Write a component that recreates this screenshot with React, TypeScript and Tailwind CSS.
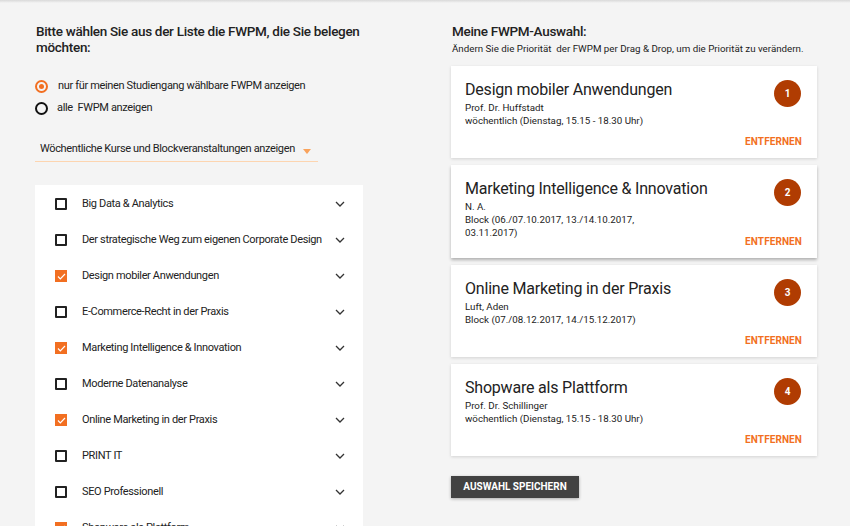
import React from "react";

const courses: { name: string; checked: boolean }[] = [
  { name: "Big Data & Analytics", checked: false },
  { name: "Der strategische Weg zum eigenen Corporate Design", checked: false },
  { name: "Design mobiler Anwendungen", checked: true },
  { name: "E-Commerce-Recht in der Praxis", checked: false },
  { name: "Marketing Intelligence & Innovation", checked: true },
  { name: "Moderne Datenanalyse", checked: false },
  { name: "Online Marketing in der Praxis", checked: true },
  { name: "PRINT IT", checked: false },
  { name: "SEO Professionell", checked: false },
  { name: "Shopware als Plattform", checked: true },
];

const selected = [
  {
    title: "Design mobiler Anwendungen",
    lines: ["Prof. Dr. Huffstadt", "wöchentlich (Dienstag, 15.15 - 18.30 Uhr)"],
  },
  {
    title: "Marketing Intelligence & Innovation",
    lines: ["N. A.", "Block (06./07.10.2017, 13./14.10.2017,", "03.11.2017)"],
  },
  {
    title: "Online Marketing in der Praxis",
    lines: ["Luft, Aden", "Block (07./08.12.2017, 14./15.12.2017)"],
  },
  {
    title: "Shopware als Plattform",
    lines: ["Prof. Dr. Schillinger", "wöchentlich (Dienstag, 15.15 - 18.30 Uhr)"],
  },
];

function Chevron() {
  return (
    <svg width="10" height="6" viewBox="0 0 10 6" fill="none" className="shrink-0">
      <polyline points="1,1 5,5 9,1" stroke="#333" strokeWidth="1.3" />
    </svg>
  );
}

function Checkbox({ checked }: { checked: boolean }) {
  if (checked) {
    return (
      <div className="w-[12px] h-[12px] shrink-0 bg-[#f26f21] flex items-center justify-center">
        <svg width="9" height="7" viewBox="0 0 9 7" fill="none">
          <polyline points="1,3.5 3.3,5.8 8,1" stroke="#fff" strokeWidth="1.2" />
        </svg>
      </div>
    );
  }
  return <div className="w-[12px] h-[12px] shrink-0 border-2 border-[#222] rounded-[1px]" />;
}

export default function App() {
  return (
    <div
      className="w-[850px] h-[526px] overflow-hidden bg-[#f4f4f4] text-[#222] relative"
      style={{ fontFamily: "Roboto, 'Liberation Sans', sans-serif" }}
    >
      <div className="absolute top-0 left-0 right-0 h-[3px] bg-gradient-to-b from-[#d9d9d9] to-[#f4f4f4]" />
      <div className="flex pl-[35px] pt-[23px]">
        {/* Left column */}
        <div className="w-[328px] flex flex-col">
          <h2 className="text-[13.5px] font-medium leading-[16px] tracking-[-0.3px] pl-[1px] text-[#222]">
            Bitte wählen Sie aus der Liste die FWPM, die Sie belegen möchten:
          </h2>
          <div className="mt-[25px] flex flex-col gap-[9px] text-[11px] tracking-[-0.35px] text-[#222]">
            <div className="flex items-center h-[13px]">
              <div className="w-[13px] h-[13px] shrink-0 rounded-full border-2 border-[#f26f21] flex items-center justify-center">
                <div className="w-[5px] h-[5px] rounded-full bg-[#f26f21]" />
              </div>
              <span className="ml-[10px]">nur für meinen Studiengang wählbare FWPM anzeigen</span>
            </div>
            <div className="flex items-center h-[13px]">
              <div className="w-[13px] h-[13px] shrink-0 rounded-full border-2 border-[#111]" />
              <span className="ml-[9px]">alle&nbsp; FWPM anzeigen</span>
            </div>
          </div>
          <div className="mt-[22px] w-[283px] h-[25px] border-b border-[#fdd5b0] flex items-center justify-between pl-[5px] pr-[7px] text-[11px] tracking-[-0.35px] text-[#222]">
            <span className="whitespace-nowrap">Wöchentliche Kurse und Blockveranstaltungen anzeigen</span>
            <svg width="8" height="5" viewBox="0 0 8 5" className="mt-[5px] shrink-0">
              <polygon points="0,0 8,0 4,5" fill="#f9a35c" />
            </svg>
          </div>
          <div className="mt-[23px] bg-white pt-[1px] h-[400px]">
            {courses.map((c) => (
              <div key={c.name} className="h-[36px] flex items-center pl-[20px] pr-[18px]">
                <Checkbox checked={c.checked} />
                <span className="ml-[15px] text-[11px] tracking-[-0.35px] text-[#222] flex-1 whitespace-nowrap">
                  {c.name}
                </span>
                <Chevron />
              </div>
            ))}
          </div>
        </div>

        {/* Right column */}
        <div className="ml-[88px] w-[366px] flex flex-col">
          <h2 className="text-[13.5px] font-medium leading-[17px] tracking-[-0.3px] pl-[1px] text-[#222]">
            Meine FWPM-Auswahl:
          </h2>
          <p className="mt-[3px] text-[9.75px] leading-[12px] pl-[1px] text-[#222] whitespace-nowrap">
            Ändern Sie die Priorität&nbsp; der FWPM per Drag &amp; Drop, um die Priorität zu verändern.
          </p>
          <div className="mt-[11px] flex flex-col gap-[7px]">
            {selected.map((s, i) => (
              <div
                key={s.title}
                className={
                  i === 1
                    ? "bg-white h-[93px] relative px-[14px] pt-[14px] shadow-[0_2px_3px_rgba(0,0,0,0.28)]"
                    : "bg-white h-[92px] relative px-[14px] pt-[14px] shadow-[0_1px_3px_rgba(0,0,0,0.14)]"
                }
              >
                <div className="text-[16px] leading-[20px] tracking-[-0.2px] text-[#222]">{s.title}</div>
                <div className="mt-[1px] text-[9.75px] leading-[13px] text-[#222]">
                  {s.lines.map((l) => (
                    <div key={l}>{l}</div>
                  ))}
                </div>
                <div className="absolute right-[16px] top-[14px] w-[27px] h-[27px] rounded-full bg-[#b03c02] text-white text-[10px] font-bold flex items-center justify-center">
                  {i + 1}
                </div>
                <div className="absolute right-[15px] bottom-[9px] text-[10px] font-bold text-[#f26f21] tracking-[0.1px]">
                  ENTFERNEN
                </div>
              </div>
            ))}
          </div>
          <div className="mt-[17px]">
            <button className="bg-[#424242] text-white text-[10px] font-bold h-[22px] w-[128px] shadow-[0_1px_3px_rgba(0,0,0,0.3)]">
              AUSWAHL SPEICHERN
            </button>
          </div>
        </div>
      </div>
    </div>
  );
}
